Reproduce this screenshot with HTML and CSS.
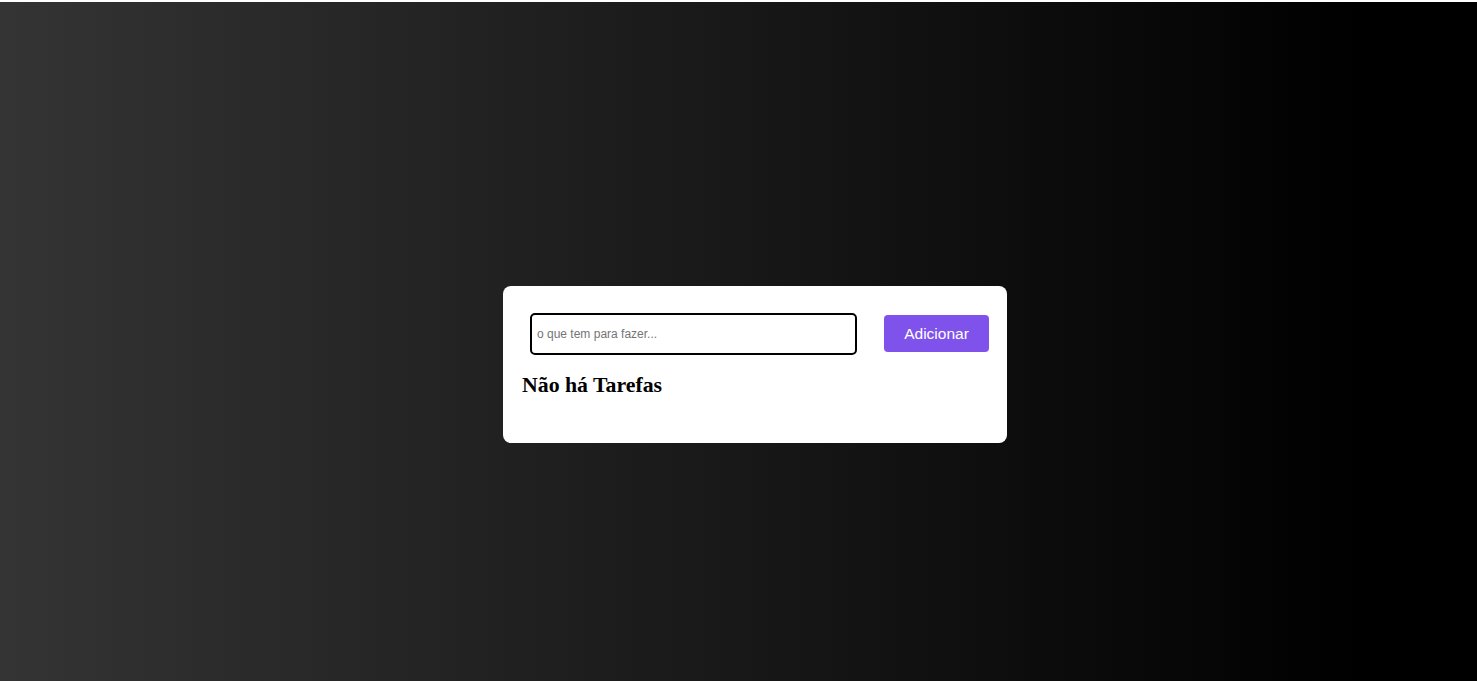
FILE: index.html
```html
<!DOCTYPE html>
<html lang="pt">
<head>
<meta charset="utf-8">
<title>Tarefas</title>
<link rel="stylesheet" href="styles.css">
</head>
<body>
<div class="app">
  <div class="card">
    <div class="row">
      <input class="task-input" type="text" placeholder="o que tem para fazer...">
      <button class="add-btn">Adicionar</button>
    </div>
    <h2 class="empty">Não há Tarefas</h2>
  </div>
</div>
</body>
</html>
```

FILE: styles.css
```css
html, body {
  margin: 0;
  padding: 0;
  background: #ffffff;
}

.app {
  margin-top: 2px;
  height: 679px;
  box-sizing: border-box;
  padding: 284px 0 0 503px;
  background: linear-gradient(to right, #343434 0%, #000000 92%);
  display: flex;
  align-items: flex-start;
}

.card {
  width: 504px;
  box-sizing: border-box;
  background: #ffffff;
  border-radius: 8px;
  padding: 19px 18px 19px 19px;
}

.row {
  display: flex;
  align-items: center;
}

.task-input {
  width: 327px;
  height: 42px;
  box-sizing: border-box;
  margin: 8px 27px 8px 8px;
  border: 2px solid #000000;
  border-radius: 5px;
  padding: 0 5px;
  font-family: "Liberation Sans", Arial, sans-serif;
  font-size: 12px;
  color: #000;
  outline: none;
}

.task-input::placeholder {
  color: #757575;
}

.add-btn {
  width: 105px;
  height: 37px;
  box-sizing: border-box;
  margin-top: -1px;
  border: none;
  border-radius: 4px;
  background: #8052ec;
  color: #ffffff;
  font-family: "Liberation Sans", Arial, sans-serif;
  font-size: 15.5px;
  padding: 0;
}

.empty {
  margin: 10px 0 26px 0;
  font-family: "Liberation Serif", "Times New Roman", serif;
  font-size: 21.8px;
  font-weight: bold;
  line-height: 25px;
  color: #000000;
}
```
